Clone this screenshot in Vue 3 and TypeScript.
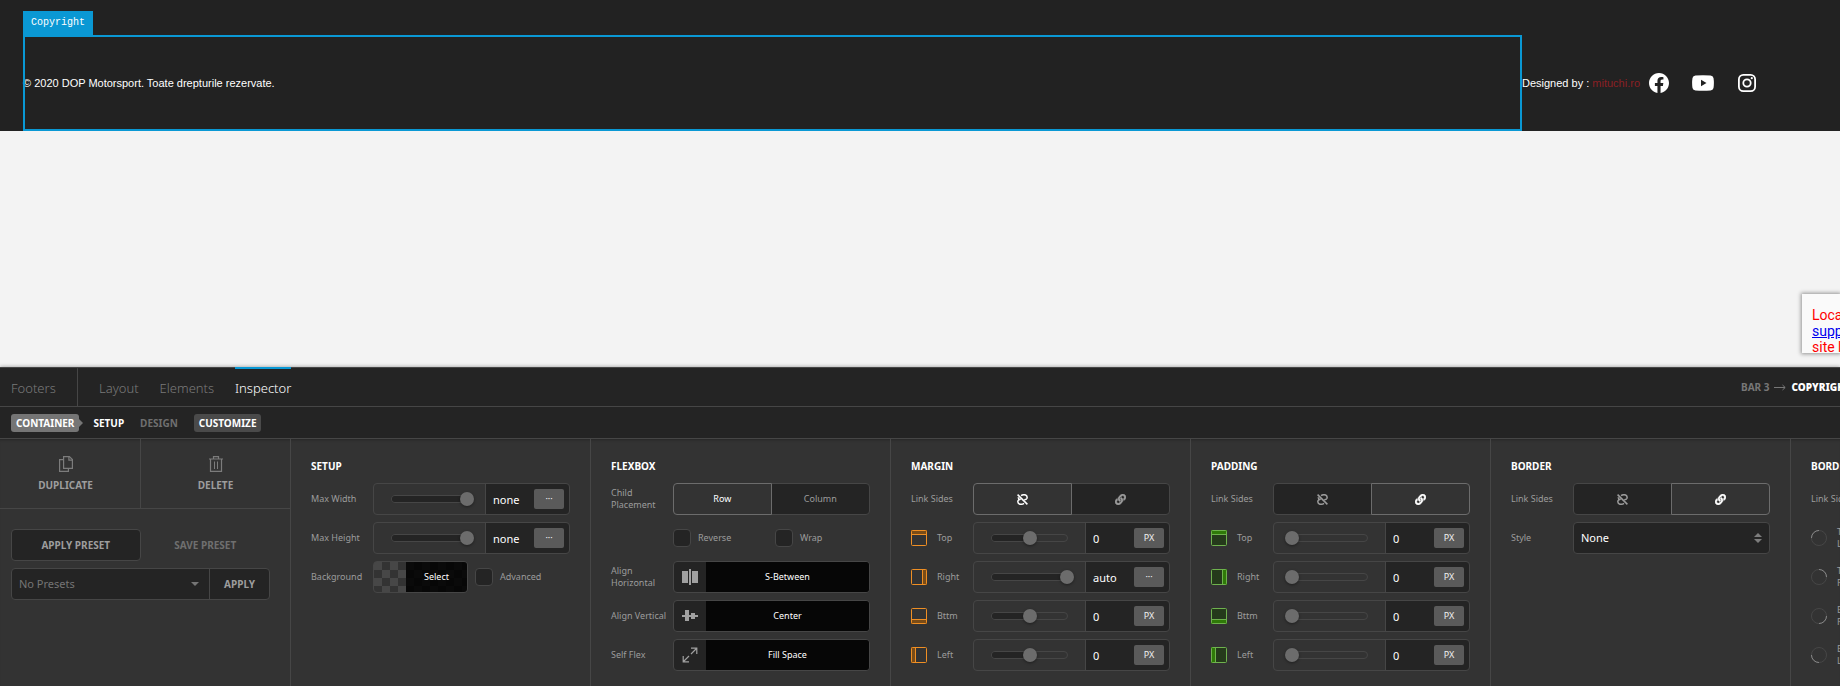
<script setup lang="ts">
import { reactive } from 'vue'

type Side = 'top' | 'right' | 'bottom' | 'left'
interface SliderRow {
  id: string
  label: string
  value: string
  unit: string
  position: number
  side?: Side
}
interface BoxGroup {
  id: string
  title: string
  linked: boolean
  rows: SliderRow[]
}

const sizes = reactive<SliderRow[]>([
  { id: 'max-width', label: 'Max Width', value: 'none', unit: '···', position: 100 },
  { id: 'max-height', label: 'Max Height', value: 'none', unit: '···', position: 100 },
])

const boxes = reactive<BoxGroup[]>([
  {
    id: 'margin',
    title: 'MARGIN',
    linked: false,
    rows: [
      { id: 'margin-top', label: 'Top', value: '0', unit: 'PX', position: 50, side: 'top' },
      { id: 'margin-right', label: 'Right', value: 'auto', unit: '···', position: 100, side: 'right' },
      { id: 'margin-bottom', label: 'Bttm', value: '0', unit: 'PX', position: 50, side: 'bottom' },
      { id: 'margin-left', label: 'Left', value: '0', unit: 'PX', position: 50, side: 'left' },
    ],
  },
  {
    id: 'padding',
    title: 'PADDING',
    linked: true,
    rows: [
      { id: 'padding-top', label: 'Top', value: '0', unit: 'PX', position: 0, side: 'top' },
      { id: 'padding-right', label: 'Right', value: '0', unit: 'PX', position: 0, side: 'right' },
      { id: 'padding-bottom', label: 'Bttm', value: '0', unit: 'PX', position: 0, side: 'bottom' },
      { id: 'padding-left', label: 'Left', value: '0', unit: 'PX', position: 0, side: 'left' },
    ],
  },
  { id: 'border', title: 'BORDER', linked: true, rows: [] },
])

const sideBand: Record<Side, { x: number; y: number; w: number; h: number; line: string }> = {
  top: { x: 0, y: 0, w: 16, h: 4, line: 'M0 4.5H16' },
  right: { x: 12, y: 0, w: 4, h: 16, line: 'M11.5 0V16' },
  bottom: { x: 0, y: 12, w: 16, h: 4, line: 'M0 11.5H16' },
  left: { x: 0, y: 0, w: 4, h: 16, line: 'M4.5 0V16' },
}

const corners = [
  { label: 'Top\nLeft', arc: 'M.5 8.5A8 8 0 0 1 8.5 .5' },
  { label: 'Top\nRight', arc: 'M8.5 .5A8 8 0 0 1 16.5 8.5' },
  { label: 'Bttm\nRight', arc: 'M16.5 8.5A8 8 0 0 1 8.5 16.5' },
  { label: 'Bttm\nLeft', arc: 'M8.5 16.5A8 8 0 0 1 .5 8.5' },
]

const linkPath =
  'M326.612 185.391c59.747 59.809 58.927 155.698.36 214.59-.11.12-.24.25-.36.37l-67.2 67.2c-59.27 59.27-155.699 59.262-214.96 0-59.27-59.26-59.27-155.7 0-214.96l37.106-37.106c9.84-9.84 26.786-3.3 27.294 10.606.648 17.722 3.826 35.527 9.69 52.721 1.986 5.822.567 12.262-3.783 16.612l-13.087 13.087c-28.026 28.026-28.905 73.66-1.155 101.96 28.024 28.579 74.086 28.749 102.325.51l67.2-67.19c28.191-28.191 28.073-73.757 0-101.83-3.701-3.694-7.429-6.564-10.341-8.569a16.037 16.037 0 0 1-6.947-12.606c-.396-10.567 3.348-21.456 11.698-29.806l21.054-21.055c5.521-5.521 14.182-6.199 20.584-1.731a152.482 152.482 0 0 1 20.522 17.197zM467.547 44.449c-59.261-59.262-155.69-59.27-214.96 0l-67.2 67.2c-.12.12-.25.25-.36.37-58.566 58.892-59.387 154.781.36 214.59a152.454 152.454 0 0 0 20.521 17.196c6.402 4.468 15.064 3.789 20.584-1.731l21.054-21.055c8.35-8.35 12.094-19.239 11.698-29.806a16.037 16.037 0 0 0-6.947-12.606c-2.912-2.005-6.64-4.875-10.341-8.569-28.073-28.073-28.191-73.639 0-101.83l67.2-67.19c28.239-28.239 74.3-28.069 102.325.51 27.75 28.3 26.872 73.934-1.155 101.96l-13.087 13.087c-4.35 4.35-5.769 10.79-3.783 16.612 5.864 17.194 9.042 34.999 9.69 52.721.509 13.906 17.454 20.446 27.294 10.606l37.106-37.106c59.271-59.259 59.271-155.699.001-214.959z'
</script>

<template>
  <div class="page">
    <main class="stage">
      <footer class="site-footer">
        <div class="selected">
          <span class="selected-tag">Copyright</span>
          <p>© 2020 DOP Motorsport. Toate drepturile rezervate.</p>
        </div>
        <p class="designed">Designed by : <a href="#">mituchi.ro</a></p>
        <a class="social" href="#" aria-label="Facebook">
          <svg width="20" height="20" viewBox="0 0 24 24"><path fill="currentColor" d="M24 12.07C24 5.4 18.63 0 12 0S0 5.4 0 12.07c0 6.03 4.39 11.02 10.13 11.93v-8.44H7.08v-3.49h3.05V9.41c0-3.02 1.79-4.69 4.53-4.69 1.31 0 2.68.24 2.68.24v2.97h-1.51c-1.49 0-1.96.93-1.96 1.88v2.26h3.33l-.53 3.49h-2.8V24C19.61 23.09 24 18.1 24 12.07z" /></svg>
        </a>
        <a class="social" href="#" aria-label="YouTube">
          <svg width="22" height="16" viewBox="0 0 22 16"><path fill="currentColor" fill-rule="evenodd" d="M3.5 .5Q11 -.1 18.500 .5Q21 .8 21.500 3Q22.300 8 21.500 13Q21 15.200 18.500 15.500Q11 16.100 3.500 15.500Q1 15.200 .5 13Q-.3 8 .5 3Q1 .8 3.500 .5ZM9 4.800V11.200L14.500 8Z" /></svg>
        </a>
        <a class="social" href="#" aria-label="Instagram">
          <svg width="18" height="18" viewBox="0 0 18 18" fill="none" stroke="currentColor" stroke-width="1.8"><rect x=".9" y=".9" width="16.200" height="16.200" rx="4.400" /><circle cx="9" cy="9" r="3.700" /><circle cx="13.800" cy="4.200" r="1.100" fill="currentColor" stroke="none" /></svg>
        </a>
      </footer>
      <aside class="notice">Local<br /><a href="#">support</a><br />site l</aside>
    </main>

    <section class="panel">
      <nav class="tabs">
        <a href="#" class="tab home">Footers</a>
        <a href="#" class="tab">Layout</a>
        <a href="#" class="tab">Elements</a>
        <a href="#" class="tab current">Inspector</a>
        <div class="crumbs">
          <span>BAR 3</span>
          <svg width="12" height="7" viewBox="0 0 12 7" fill="none" stroke="currentColor"><path d="M0 3.500H11M8.500 1L11.200 3.500L8.500 6" /></svg>
          <strong>COPYRIGHT</strong>
        </div>
      </nav>
      <nav class="subtabs">
        <a href="#" class="tag container-tag">CONTAINER</a>
        <a href="#" class="sub on">SETUP</a>
        <a href="#" class="sub">DESIGN</a>
        <a href="#" class="tag">CUSTOMIZE</a>
      </nav>

      <div class="body">
        <div class="actions">
          <div class="action-pair">
            <button type="button">
              <svg width="14" height="16" viewBox="0 0 14 16" fill="none" stroke="currentColor" stroke-width="1.200"><path d="M4.600 3.600H.6V15.400H9.400V12.400" /><path d="M4.600 .6H10.400L13.400 3.600V12.400H4.600Z" /><path d="M9.900 .6V4.100H13.400" /></svg>
              DUPLICATE
            </button>
            <button type="button">
              <svg width="14" height="16" viewBox="0 0 14 16" fill="none" stroke="currentColor"><path d="M0 3H14M4.500 3V.6H9.500V3M1.500 3V15.400H12.500V3" stroke-width="1.200" /><path d="M5.500 5.500V13M8.500 5.500V13" /></svg>
              DELETE
            </button>
          </div>
          <div class="presets">
            <div class="preset-buttons">
              <button type="button" class="dark-button">APPLY PRESET</button>
              <button type="button" class="plain-button">SAVE PRESET</button>
            </div>
            <div class="preset-pick">
              <select aria-label="Preset"><option>No Presets</option></select>
              <svg class="caret" width="8" height="4" viewBox="0 0 8 4"><path fill="currentColor" d="M0 0H8L4 4Z" /></svg>
              <button type="button">APPLY</button>
            </div>
          </div>
        </div>

        <section class="column">
          <h2>SETUP</h2>
          <div v-for="row in sizes" :key="row.id" class="row">
            <label class="name" :for="row.id">{{ row.label }}</label>
            <div class="measure">
              <div class="slider">
                <span class="track"><span class="fill" :style="{ width: row.position + '%' }"></span></span>
                <input v-model.number="row.position" type="range" min="0" max="100" :aria-label="row.label" />
              </div>
              <input :id="row.id" v-model="row.value" class="value" type="text" />
              <button type="button" class="unit">{{ row.unit }}</button>
            </div>
          </div>
          <div class="row">
            <span class="name">Background</span>
            <div class="split">
              <button type="button" class="picker swatch"><span class="preview"></span><span class="picked">Select</span></button>
              <label class="check"><input type="checkbox" />Advanced</label>
            </div>
          </div>
        </section>

        <section class="column">
          <h2>FLEXBOX</h2>
          <div class="row">
            <span class="name">Child Placement</span>
            <div class="toggle">
              <button type="button" class="active" aria-pressed="true">Row</button>
              <button type="button" aria-pressed="false">Column</button>
            </div>
          </div>
          <div class="row">
            <span class="name"></span>
            <div class="split">
              <label class="check"><input type="checkbox" />Reverse</label>
              <label class="check"><input type="checkbox" />Wrap</label>
            </div>
          </div>
          <div class="row">
            <span class="name">Align Horizontal</span>
            <button type="button" class="picker">
              <span class="preview"><svg width="16" height="16" viewBox="0 0 16 16" fill="currentColor"><path d="M0 2H6V14H0ZM7 0H9V16H7ZM10 2H16V14H10Z" /></svg></span>
              <span class="picked">S-Between</span>
            </button>
          </div>
          <div class="row">
            <span class="name">Align Vertical</span>
            <button type="button" class="picker">
              <span class="preview"><svg width="16" height="12" viewBox="0 0 16 12" fill="currentColor"><path d="M0 5H3V0H7V5H9V3H13V5H16V7H13V9H9V7H7V11H3V7H0Z" /></svg></span>
              <span class="picked">Center</span>
            </button>
          </div>
          <div class="row">
            <span class="name">Self Flex</span>
            <button type="button" class="picker">
              <span class="preview"><svg width="16" height="16" viewBox="0 0 16 16" fill="none" stroke="currentColor" stroke-width="1.200"><path d="M9 1.200H14.800V7M14.500 1.500L9 7M1.200 9V14.800H7M1.500 14.500L7 9" /></svg></span>
              <span class="picked">Fill Space</span>
            </button>
          </div>
        </section>

        <section v-for="box in boxes" :key="box.id" class="column" :class="box.id">
          <h2>{{ box.title }}</h2>
          <div class="row">
            <span class="name">Link Sides</span>
            <div class="toggle">
              <button type="button" aria-label="Unlink sides" :class="{ active: !box.linked }" :aria-pressed="!box.linked" @click="box.linked = false">
                <svg width="11" height="11" viewBox="0 0 11 11" fill="none" stroke="currentColor" stroke-width="1.500"><path d="M.6 .6L10.400 10.400" /><path d="M4 1.700Q6.200 .2 8.600 1Q10.600 2 10 4.200Q9.300 5.900 7.200 5.800M1.500 3.200Q1 5 3 5.700M7 9.300Q4.800 10.800 2.400 10Q.4 9 1 6.800Q1.700 5.100 3.800 5.200" /></svg>
              </button>
              <button type="button" aria-label="Link sides" :class="{ active: box.linked }" :aria-pressed="box.linked" @click="box.linked = true">
                <svg width="11" height="11" viewBox="0 0 512 512"><path fill="currentColor" stroke="currentColor" stroke-width="20" :d="linkPath" /></svg>
              </button>
            </div>
          </div>
          <div v-for="row in box.rows" :key="row.id" class="row">
            <label class="name with-icon" :for="row.id">
              <svg v-if="row.side" class="side" width="16" height="16" viewBox="0 0 16 16">
                <rect class="area" x=".5" y=".5" width="15" height="15" rx="1" />
                <rect class="band" :x="sideBand[row.side].x" :y="sideBand[row.side].y" :width="sideBand[row.side].w" :height="sideBand[row.side].h" />
                <path class="outline" :d="sideBand[row.side].line" />
                <rect class="outline" x=".5" y=".5" width="15" height="15" rx="1" />
              </svg>
              {{ row.label }}
            </label>
            <div class="measure">
              <div class="slider">
                <span class="track"><span class="fill" :style="{ width: row.position + '%' }"></span></span>
                <input v-model.number="row.position" type="range" min="0" max="100" :aria-label="row.label" />
              </div>
              <input :id="row.id" v-model="row.value" class="value" type="text" />
              <button type="button" class="unit">{{ row.unit }}</button>
            </div>
          </div>
          <div v-if="box.id === 'border'" class="row">
            <label class="name" for="border-style">Style</label>
            <div class="choice">
              <select id="border-style"><option>None</option></select>
              <svg width="8" height="10" viewBox="0 0 8 10"><path fill="currentColor" d="M0 4L4 0L8 4ZM0 6H8L4 10Z" /></svg>
            </div>
          </div>
        </section>

        <section class="column">
          <h2>BORDER RADIUS</h2>
          <div class="row"><span class="name">Link Sides</span></div>
          <div v-for="corner in corners" :key="corner.label" class="row">
            <span class="name with-icon">
              <svg width="16" height="16" viewBox="0 0 17 17" fill="none"><circle cx="8.500" cy="8.500" r="8" stroke="#484848" /><path :d="corner.arc" stroke="#8c8c8c" /></svg>
              {{ corner.label }}
            </span>
          </div>
        </section>
      </div>
    </section>
  </div>
</template>

<style>
body {
  margin: 0;
  background: #f3f3f3;
}
</style>

<style scoped>
* {
  box-sizing: border-box;
}
.page {
  display: flex;
  flex-direction: column;
  min-height: 100vh;
  overflow: hidden;
  background: #f3f3f3;
  font-family: 'Noto Sans', sans-serif;
}
button,
input,
select {
  margin: 0;
  padding: 0;
  border: 0;
  border-radius: 0;
  background: none;
  color: inherit;
  font: inherit;
  appearance: none;
}
p,
h2 {
  margin: 0;
}
a {
  text-decoration: none;
}
svg {
  flex: none;
  display: block;
}
.stage {
  position: relative;
  flex: 1;
}
.site-footer {
  display: flex;
  align-items: center;
  padding: 35px 71px 0 23px;
  background: #222;
  color: #fff;
  font: 11px/16px 'Liberation Sans', Arial, sans-serif;
}
.selected {
  position: relative;
  flex: 1;
  display: flex;
  align-items: center;
  height: 96px;
}
.selected::after {
  content: '';
  position: absolute;
  inset: 0;
  border: 2px solid #0a98d4;
}
.selected-tag {
  position: absolute;
  left: 0;
  bottom: 100%;
  padding: 0 8px;
  background: #0a98d4;
  font: 10px/24px 'Liberation Mono', 'Courier New', monospace;
}
.designed {
  width: 115px;
  white-space: nowrap;
}
.designed a {
  color: #8c2024;
}
.social {
  display: flex;
  justify-content: center;
  width: 44px;
  color: #fff;
}
.notice {
  position: absolute;
  right: 0;
  bottom: 14px;
  width: 38px;
  height: 59px;
  padding: 13px 0 0 10px;
  overflow: hidden;
  background: #fafafa;
  box-shadow: 0 0 4px 1px rgba(0, 0, 0, 0.4);
  color: #f00;
  font: 14px/16px Roboto, sans-serif;
  white-space: nowrap;
}
.notice a {
  color: #00e;
  text-decoration: underline;
}

.panel {
  border-top: 1px solid #464646;
  background: #333;
  box-shadow: 0 0 4px rgba(0, 0, 0, 0.4);
  color: #9c9c9c;
  font-size: 9px;
  line-height: 12px;
}
.tabs,
.subtabs {
  display: flex;
  align-items: center;
  border-bottom: 1px solid #464646;
  background: #242424;
}
.tabs {
  height: 39px;
  gap: 21px;
}
.tab {
  height: 40px;
  margin-top: -1px;
  border-top: 2px solid transparent;
  color: #7a7a7a;
  font-size: 13px;
  font-weight: 300;
  line-height: 38px;
}
.tab.home {
  width: 78px;
  padding-left: 11px;
  border-right: 1px solid #464646;
}
.tab.current {
  border-top-color: #0a98d4;
  color: #fff;
}
.crumbs {
  display: flex;
  align-items: center;
  gap: 5px;
  width: 99px;
  margin-left: auto;
  overflow: hidden;
  color: #777;
  font-size: 10px;
  font-weight: 700;
  white-space: nowrap;
}
.crumbs strong {
  color: #fff;
}
.subtabs {
  height: 32px;
  padding-left: 11px;
  font-size: 10px;
  font-weight: 700;
}
.sub {
  margin-right: 16px;
  color: #6f6f6f;
}
.sub.on {
  color: #fff;
}
.tag {
  padding: 0 5px;
  border-radius: 3px;
  background: #4a4a4a;
  color: #fff;
  line-height: 18px;
}
.container-tag {
  position: relative;
  margin-right: 14px;
  background: #757575;
}
.container-tag::after {
  content: '';
  position: absolute;
  left: 100%;
  top: 5px;
  border: 4px solid transparent;
  border-right-width: 0;
  border-left-color: #757575;
}

.body {
  display: flex;
  overflow: hidden;
  box-shadow: inset 0 3px 3px -2px rgba(0, 0, 0, 0.25);
}
.actions {
  flex: 0 0 291px;
  border-right: 1px solid #464646;
  font-size: 10px;
  font-weight: 700;
  color: #9d9d9d;
}
.action-pair {
  display: grid;
  grid-template-columns: 141px 1fr;
  border-bottom: 1px solid #464646;
}
.action-pair button {
  display: flex;
  flex-direction: column;
  align-items: center;
  justify-content: center;
  gap: 7px;
  height: 69px;
}
.action-pair button:first-child {
  padding-right: 9px;
  border-right: 1px solid #464646;
}
.action-pair svg {
  color: #7c7c7c;
}
.presets {
  display: grid;
  gap: 7px;
  padding: 20px 20px 0 11px;
}
.preset-buttons {
  display: grid;
  grid-template-columns: 1fr 1fr;
  height: 32px;
}
.dark-button {
  border: 1px solid #464646;
  border-radius: 4px;
  background: #242424;
}
.plain-button {
  color: #6f6f6f;
}
.preset-pick {
  display: flex;
  align-items: center;
  height: 32px;
  border: 1px solid #464646;
  border-radius: 4px;
  background: #242424;
}
.preset-pick select {
  flex: 1;
  height: 30px;
  padding-left: 7px;
  color: #757575;
  font-size: 11px;
  font-weight: 400;
}
.caret {
  margin-right: 10px;
  color: #757575;
}
.preset-pick button {
  width: 60px;
  height: 30px;
  border-left: 1px solid #464646;
}

.column {
  flex: 0 0 300px;
  display: flex;
  flex-direction: column;
  gap: 7px;
  padding: 17px 20px 15px;
  border-right: 1px solid #464646;
}
h2 {
  color: #fff;
  font-size: 10px;
  font-weight: 700;
  line-height: 20px;
  white-space: nowrap;
}
.row {
  display: grid;
  grid-template-columns: 62px 1fr;
  align-items: center;
  height: 32px;
}
.name {
  padding-right: 6px;
}
.with-icon {
  display: flex;
  align-items: center;
  gap: 10px;
  padding-right: 0;
  white-space: pre-line;
}
.measure {
  display: grid;
  grid-template-columns: 112px 1fr 30px;
  align-items: center;
  height: 32px;
  padding-right: 5px;
  border: 1px solid #464646;
  border-radius: 4px;
  background: linear-gradient(90deg, #333 112px, #242424 112px);
}
.slider {
  display: grid;
  align-items: center;
  justify-items: center;
  height: 30px;
  border-right: 1px solid #464646;
}
.slider > * {
  grid-area: 1 / 1;
}
.track {
  width: 77px;
  height: 8px;
  border: 1px solid #464646;
  border-radius: 4px;
  overflow: hidden;
}
.fill {
  display: block;
  height: 100%;
  background: #242424;
}
.slider input {
  width: 89px;
  height: 14px;
}
.slider input::-webkit-slider-thumb {
  appearance: none;
  width: 14px;
  height: 14px;
  border-radius: 50%;
  background: #6c6c6c;
  box-shadow: 0 1px 3px rgba(0, 0, 0, 0.4);
}
.value {
  min-width: 0;
  width: 100%;
  height: 30px;
  padding-left: 7px;
  color: #fff;
  font-size: 11px;
}
.unit {
  height: 20px;
  border-radius: 2px;
  background: #5a5a5a;
  color: #f0f0f0;
}
.split {
  display: grid;
  grid-template-columns: 95px 1fr;
  gap: 7px;
}
.check {
  display: flex;
  align-items: center;
  gap: 7px;
}
.check input {
  width: 18px;
  height: 18px;
  border: 1px solid #464646;
  border-radius: 4px;
  background: #242424;
}
.toggle {
  display: grid;
  grid-template-columns: 1fr 1fr;
  height: 32px;
}
.toggle button {
  display: flex;
  align-items: center;
  justify-content: center;
  border: 1px solid #464646;
  background: #242424;
}
.toggle button:first-child {
  border-radius: 4px 0 0 4px;
}
.toggle button:last-child {
  margin-left: -1px;
  border-radius: 0 4px 4px 0;
}
.toggle button.active {
  z-index: 1;
  border-color: #6c6c6c;
  background: #333;
  color: #fff;
}
.picker {
  display: grid;
  grid-template-columns: 32px 1fr;
  height: 32px;
  border: 1px solid #464646;
  border-radius: 4px;
  overflow: hidden;
  background: #242424;
}
.preview {
  display: flex;
  align-items: center;
  justify-content: center;
  height: 30px;
  color: #a0a0a0;
}
.picked {
  background: #060606;
  color: #fff;
  line-height: 30px;
}
.swatch {
  background: repeating-conic-gradient(#333 0 25%, #474747 0 50%) 0 0 / 16px 16px;
}
.swatch .picked {
  background: rgba(0, 0, 0, 0.85);
}
.choice {
  display: flex;
  align-items: center;
  height: 32px;
  padding-right: 7px;
  border: 1px solid #464646;
  border-radius: 4px;
  background: #242424;
}
.choice select {
  flex: 1;
  height: 30px;
  padding-left: 7px;
  color: #fff;
  font-size: 11px;
}
.choice svg {
  color: #7c7c7c;
}
.area,
.outline {
  fill: none;
}
.margin .outline {
  stroke: #ef8f24;
}
.margin .band {
  fill: #7a4c17;
}
.padding .outline {
  stroke: #6fb24e;
}
.padding .area {
  fill: #253a1b;
}
.padding .band {
  fill: #2f7a08;
}
</style>
